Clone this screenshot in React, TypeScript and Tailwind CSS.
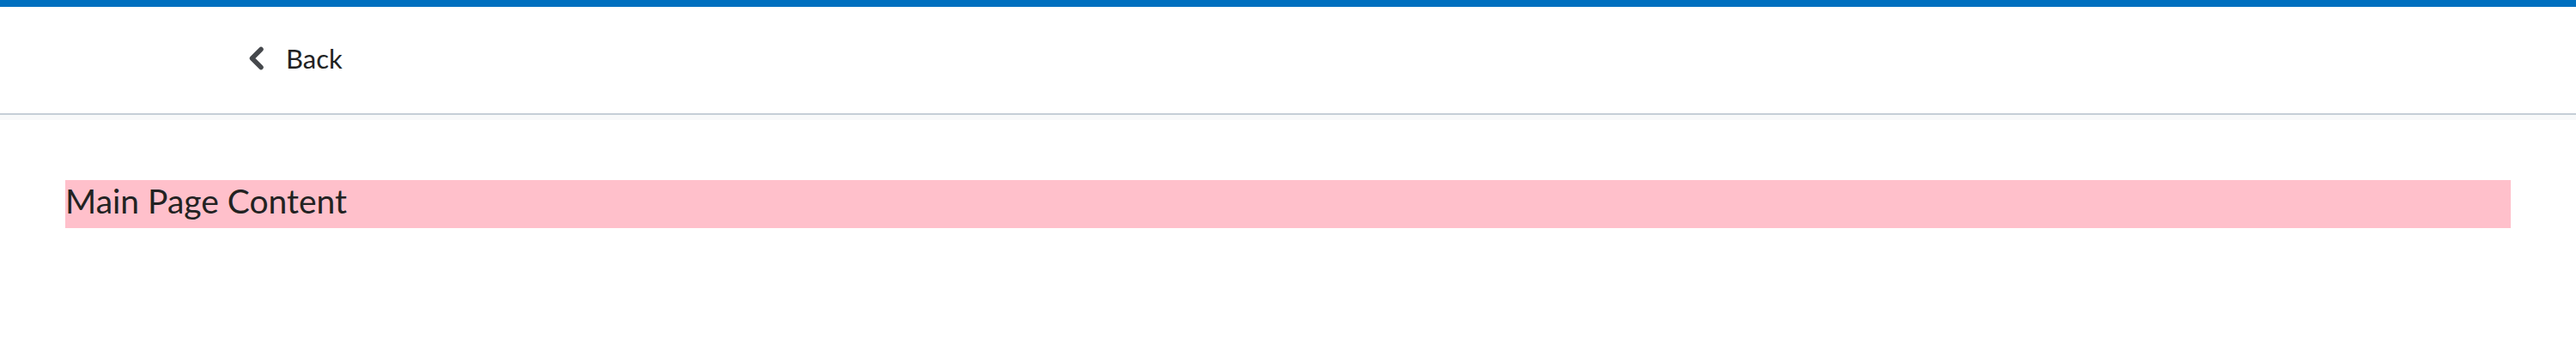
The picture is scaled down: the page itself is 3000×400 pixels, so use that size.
import React from 'react';

const ChevronLeft = () => (
  <svg width="18" height="28" viewBox="0 0 18 28" fill="none" xmlns="http://www.w3.org/2000/svg">
    <path d="M14 3.5L3.5 14L14 24.5" stroke="#45484c" strokeWidth="5.5" strokeLinecap="round" strokeLinejoin="round" />
  </svg>
);

export default function App() {
  return (
    <div className="min-h-[400px] bg-white" style={{ fontFamily: 'Lato, "Noto Sans", sans-serif' }}>
      <div className="h-2 bg-[#006fbf]" />
      <header className="h-[126px] flex items-center pl-[290px] pb-[4px] border-b-2 border-[#c5ced7]">
        <button className="flex items-center gap-[25px] text-[31px] text-[#222222]">
          <ChevronLeft />
          <span>Back</span>
        </button>
      </header>
      <div className="h-[6px] bg-[#f8f9fa]" />
      <main className="px-[76px] pt-[70px]">
        <div className="h-[56px] bg-[#ffc0cb] flex items-center pb-[8px] text-[39px] text-[#222222] leading-[48px]">
          Main Page Content
        </div>
      </main>
    </div>
  );
}
